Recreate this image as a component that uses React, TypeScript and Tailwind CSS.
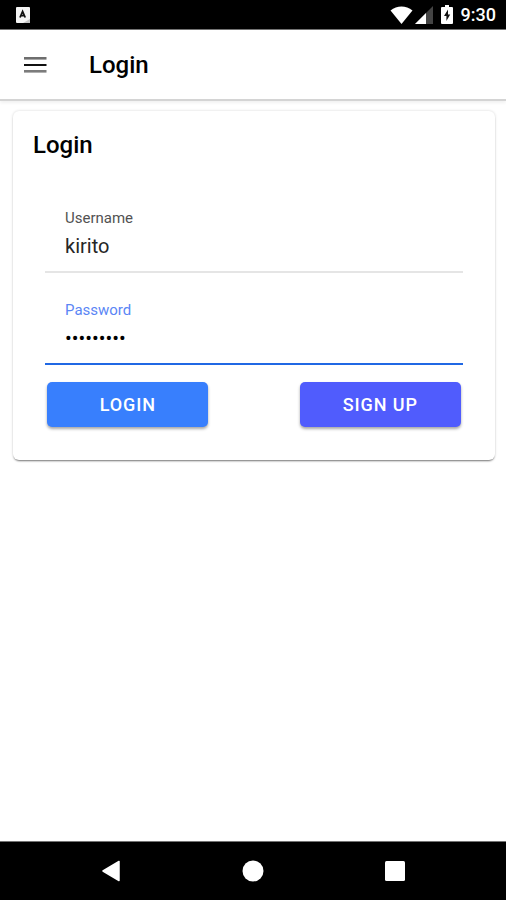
import { useState } from "react";

export default function App() {
  return (
    <div className="min-h-screen flex flex-col bg-white text-black font-['Roboto',sans-serif]">
      <StatusBar />
      <Header />
      <main className="flex-1 pl-[13px] pr-[11px] pt-[10px]">
        <LoginCard />
      </main>
      <NavigationBar />
    </div>
  );
}

function StatusBar() {
  return (
    <div className="h-[30px] shrink-0 flex items-center justify-between bg-black border-b border-neutral-500 pl-4 pr-[10px]">
      {/* Notification */}
      <svg className="w-[14px] h-[16px]" viewBox="0 0 14 16">
        <rect width="14" height="16" rx="1" fill="#f5f5f5" />
        <path d="M7 16 L14 12 V16 Z" fill="#c4c4c4" />
        <path
          d="M4 10.5 L6.6 4.5 L9.2 10.5 M5 8.6 H8.2"
          stroke="#111"
          strokeWidth="1.8"
          fill="none"
        />
      </svg>
      <div className="flex items-center text-white">
        {/* Wifi */}
        <svg className="w-[23px] h-[18px]" viewBox="0 0 23 18">
          <path d="M0.5 4.5 C7 -0.8 16 -0.8 22.5 4.5 L11.5 18 Z" fill="#fff" />
        </svg>
        {/* Signal */}
        <svg className="w-[18px] h-[18px] ml-[2px]" viewBox="0 0 18 18">
          <path d="M0 18 L18 0 V18 Z" fill="#444" />
          <path d="M0 18 L11 7 V18 Z" fill="#fff" />
        </svg>
        {/* Battery */}
        <svg className="w-[12px] h-[19px] ml-[8px]" viewBox="0 0 12 19">
          <path
            d="M1 2 H4 V0 H8 V2 H11 Q12 2 12 3 V18 Q12 19 11 19 H1 Q0 19 0 18 V3 Q0 2 1 2 Z"
            fill="#fff"
          />
          <path d="M7 4.5 L3 11 H5.4 V16 L9.2 9.4 H7 Z" fill="#111" />
        </svg>
        <span className="ml-2 text-lg leading-none font-medium">9:30</span>
      </div>
    </div>
  );
}

function Header() {
  return (
    <header className="h-[71px] shrink-0 flex items-center border-b-2 border-neutral-300 shadow-[0_2px_3px_rgba(0,0,0,0.06)] pl-6">
      <button type="button" aria-label="Menu">
        <svg className="w-[23px] h-[16px]" viewBox="0 0 23 16">
          <rect y="0" width="22.5" height="2.6" fill="#6e6e6e" />
          <rect y="7" width="22.5" height="2" fill="#111" />
          <rect y="13" width="22.5" height="2.6" fill="#7c7c7c" />
        </svg>
      </button>
      <h1 className="ml-[42px] text-2xl font-medium">Login</h1>
    </header>
  );
}

function LoginCard() {
  const [username, setUsername] = useState("kirito");
  const [password, setPassword] = useState("kirito123");
  return (
    <form
      onSubmit={(e) => e.preventDefault()}
      className="rounded-md bg-white shadow-[0_2px_2px_-1px_rgba(0,0,0,0.5),0_0_3px_rgba(0,0,0,0.16)] px-8 pb-[33px]"
    >
      <h2 className="-ml-3 pt-[18px] text-2xl leading-8 font-medium">Login</h2>
      {/* Username */}
      <div className="mt-[45px] border-b-2 border-neutral-200 px-5 pb-[9px]">
        <label
          htmlFor="username"
          className="block text-[15px] leading-6 text-neutral-600"
        >
          Username
        </label>
        <input
          id="username"
          type="text"
          value={username}
          onChange={(e) => setUsername(e.target.value)}
          className="block w-full h-8 text-xl text-neutral-800 outline-none"
        />
      </div>
      {/* Password */}
      <div className="mt-[25px] border-b-2 border-[#2068e4] px-5 pb-[9px]">
        <label
          htmlFor="password"
          className="block text-[15px] leading-6 text-[#5b86f5]"
        >
          Password
        </label>
        <input
          id="password"
          type="password"
          value={password}
          onChange={(e) => setPassword(e.target.value)}
          className="block w-full h-8 text-xl text-black outline-none"
        />
      </div>
      {/* Actions */}
      <div className="mt-[17px] px-[2px] flex justify-between">
        <button
          type="submit"
          className="w-[39%] h-[45px] rounded-[5px] bg-[#387ffd] text-white text-lg leading-6 font-medium tracking-wider shadow-[0_2px_3px_rgba(0,0,0,0.35)]"
        >
          LOGIN
        </button>
        <button
          type="button"
          className="w-[39%] h-[45px] rounded-[5px] bg-[#505cfd] text-white text-lg leading-6 font-medium tracking-wider shadow-[0_2px_3px_rgba(0,0,0,0.35)]"
        >
          SIGN UP
        </button>
      </div>
    </form>
  );
}

function NavigationBar() {
  return (
    <nav className="h-[59px] shrink-0 grid grid-cols-3 items-center bg-black border-t border-neutral-500 px-10">
      <button type="button" aria-label="Back" className="flex justify-center">
        <svg className="w-[20px] h-[22px]" viewBox="0 0 20 22">
          <path
            d="M18 1.5 V20.5 L2 11 Z"
            fill="#fff"
            stroke="#fff"
            strokeWidth="1.5"
            strokeLinejoin="round"
          />
        </svg>
      </button>
      <button type="button" aria-label="Home" className="flex justify-center">
        <svg className="w-[22px] h-[22px]" viewBox="0 0 22 22">
          <circle cx="11" cy="11" r="10.5" fill="#fff" />
        </svg>
      </button>
      <button type="button" aria-label="Recent" className="flex justify-center">
        <svg className="w-[20px] h-[20px]" viewBox="0 0 20 20">
          <rect width="20" height="20" rx="1.5" fill="#fff" />
        </svg>
      </button>
    </nav>
  );
}
